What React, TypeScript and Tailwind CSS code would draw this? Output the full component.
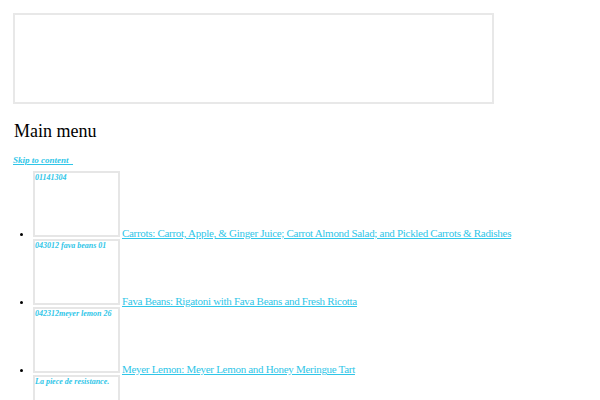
const items = [
  { alt: '01141304', title: 'Carrots: Carrot, Apple, & Ginger Juice; Carrot Almond Salad; and Pickled Carrots & Radishes' },
  { alt: '043012 fava beans 01', title: 'Fava Beans: Rigatoni with Fava Beans and Fresh Ricotta' },
  { alt: '042312meyer lemon 26', title: 'Meyer Lemon: Meyer Lemon and Honey Meringue Tart' },
  { alt: 'La piece de resistance.', title: 'La piece de resistance' },
];

export default function App() {
  return (
    <div className="min-h-screen bg-white pl-[13px] pt-[13px] text-black" style={{ fontFamily: '"Liberation Serif", serif' }}>
      {/* Banner placeholder */}
      <div className="w-[481px] h-[91px] border-2 border-[#e8e8e8]" />

      <h2 className="mt-[16px] ml-[1px] text-[18px] leading-[22px]">Main menu</h2>

      <a href="#content" className="block mt-[12px] text-[9px] leading-[12px] italic font-bold text-[#2fc6e8] underline">
        Skip to content&nbsp;&nbsp;
      </a>

      {/* Menu list */}
      <ul className="list-disc pl-[20px] mt-[5px] text-[11px] leading-[12px]">
        {items.map((item) => (
          <li key={item.alt} className="h-[68px]">
            <span className="inline-block overflow-hidden align-baseline w-[87px] h-[66px] border-2 border-[#e6e6e6] text-[8px] leading-[10px] italic font-bold text-[#2fc6e8]">
              {item.alt}
            </span>
            <a href="#" className="ml-[2px] text-[#2fc6e8] underline tracking-[-0.3px]">
              {item.title}
            </a>
          </li>
        ))}
      </ul>
    </div>
  );
}
